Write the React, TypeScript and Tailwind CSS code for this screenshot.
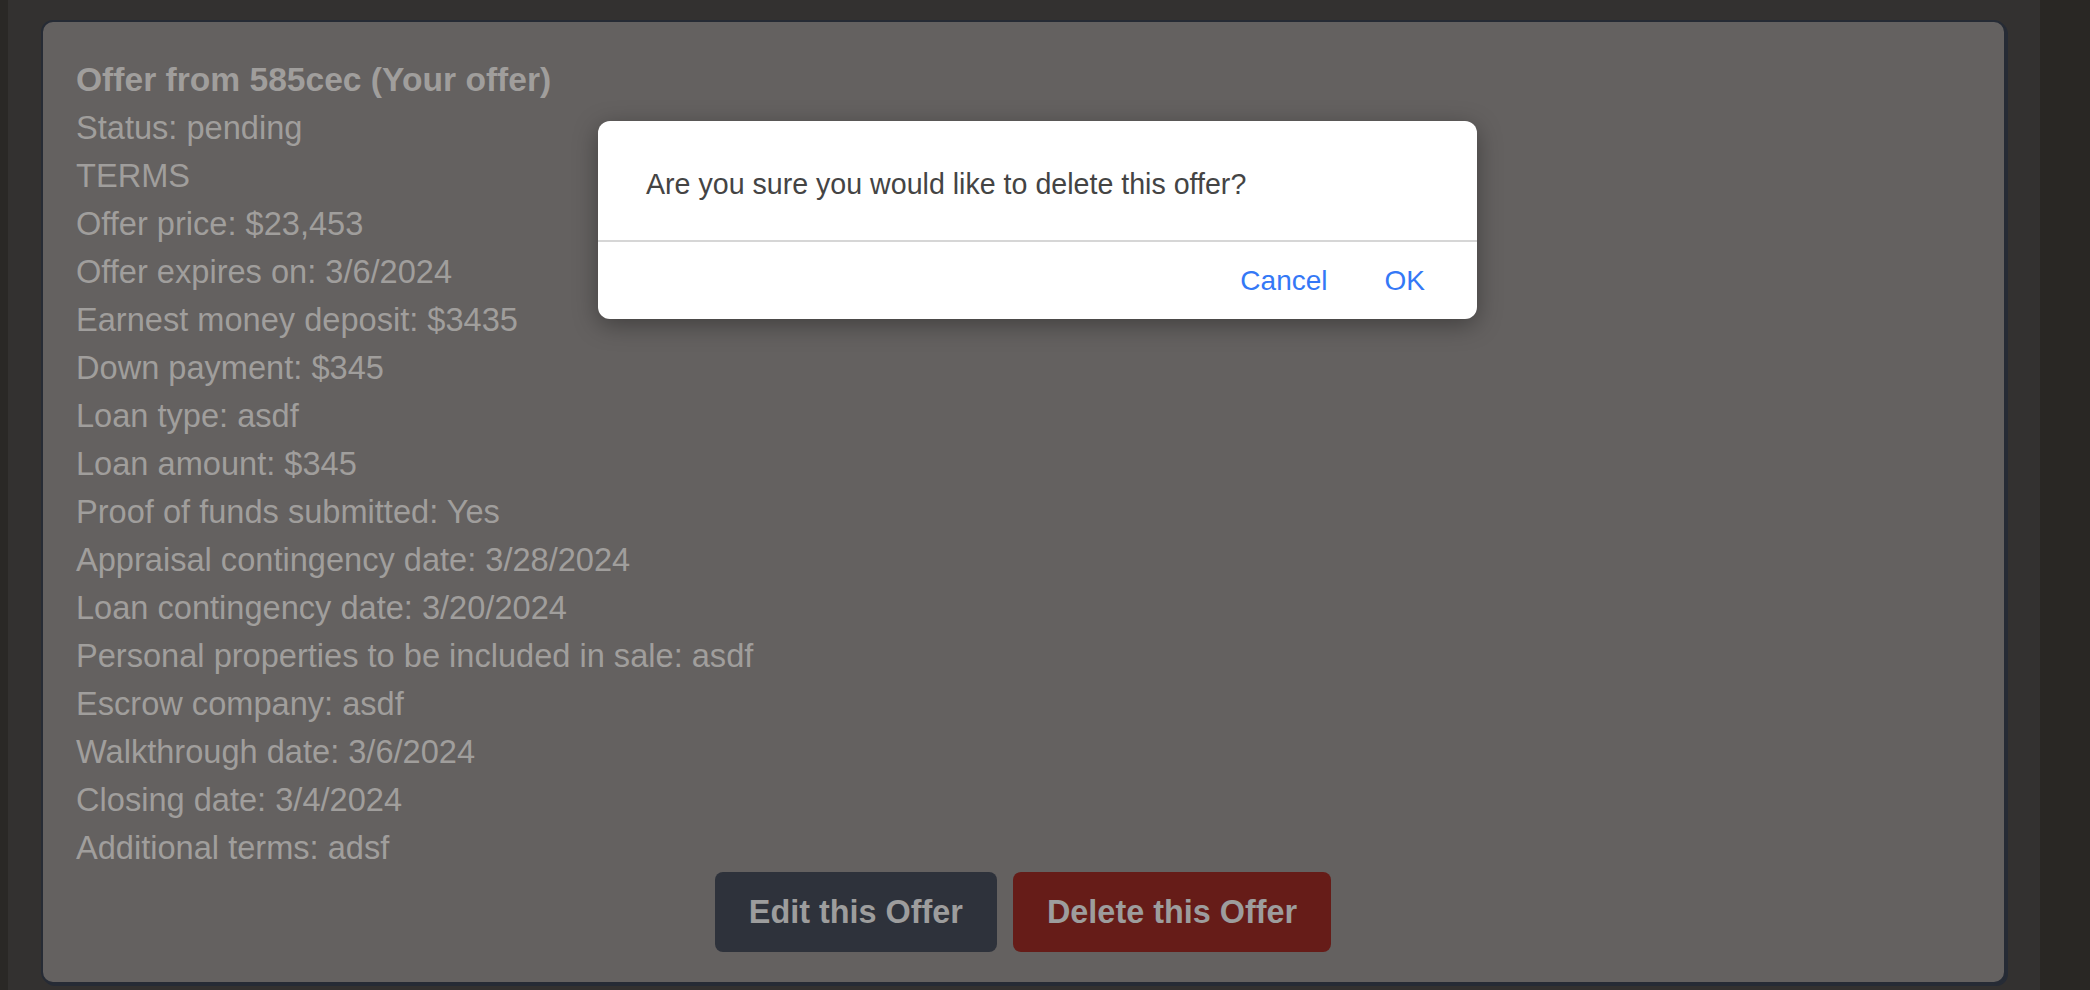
const terms: string[] = [
  'Status: pending',
  'TERMS',
  'Offer price: $23,453',
  'Offer expires on: 3/6/2024',
  'Earnest money deposit: $3435',
  'Down payment: $345',
  'Loan type: asdf',
  'Loan amount: $345',
  'Proof of funds submitted: Yes',
  'Appraisal contingency date: 3/28/2024',
  'Loan contingency date: 3/20/2024',
  'Personal properties to be included in sale: asdf',
  'Escrow company: asdf',
  'Walkthrough date: 3/6/2024',
  'Closing date: 3/4/2024',
  'Additional terms: adsf',
];

function ConfirmDialog() {
  return (
    <div className="absolute left-[598px] top-[121px] w-[879px] bg-white rounded-[12px] shadow-[0_6px_24px_rgba(0,0,0,0.35)] overflow-hidden">
      <div className="pl-[48px] pr-8 pt-[47px] pb-[40px] text-[28.6px] leading-[32px] text-[#444444]">
        Are you sure you would like to delete this offer?
      </div>
      <div className="h-[2px] bg-[#d6d6d6]" />
      <div className="h-[77px] flex items-center justify-end gap-[57px] pr-[52px] text-[28px] text-[#3478f6]">
        <button>Cancel</button>
        <button>OK</button>
      </div>
    </div>
  );
}

export default function App() {
  return (
    <div
      className="relative h-[990px] w-full flex bg-[#333130] overflow-hidden"
      style={{ fontFamily: '"Liberation Sans", Arial, sans-serif' }}
    >
      <div className="w-[8px] bg-[#2a2826]" />
      <div className="flex-1 pl-[33px] pr-[34px] pt-[20px]">
        <div className="rounded-xl border-2 border-[#262b35] shadow-[2px_2px_0_#262b35] bg-[#646160] pt-[34px] pb-[30px] pl-[33px] pr-8 text-[32.6px] leading-[48px] text-[#a09e9c]">
          <p className="font-bold text-[33.6px]">Offer from 585cec (Your offer)</p>
          {terms.map((t) => (
            <p key={t}>{t}</p>
          ))}
          <div className="flex justify-center gap-4 text-[32.4px] -ml-[2px]">
            <button className="px-[34px] py-4 rounded-lg bg-[#2e323b] font-bold text-[#9d9d9d]">
              Edit this Offer
            </button>
            <button className="px-[34px] py-4 rounded-lg bg-[#661c18] font-bold text-[#9d9d9d]">
              Delete this Offer
            </button>
          </div>
        </div>
      </div>
      <div className="w-[50px] bg-[#292724]" />
      <ConfirmDialog />
    </div>
  );
}
